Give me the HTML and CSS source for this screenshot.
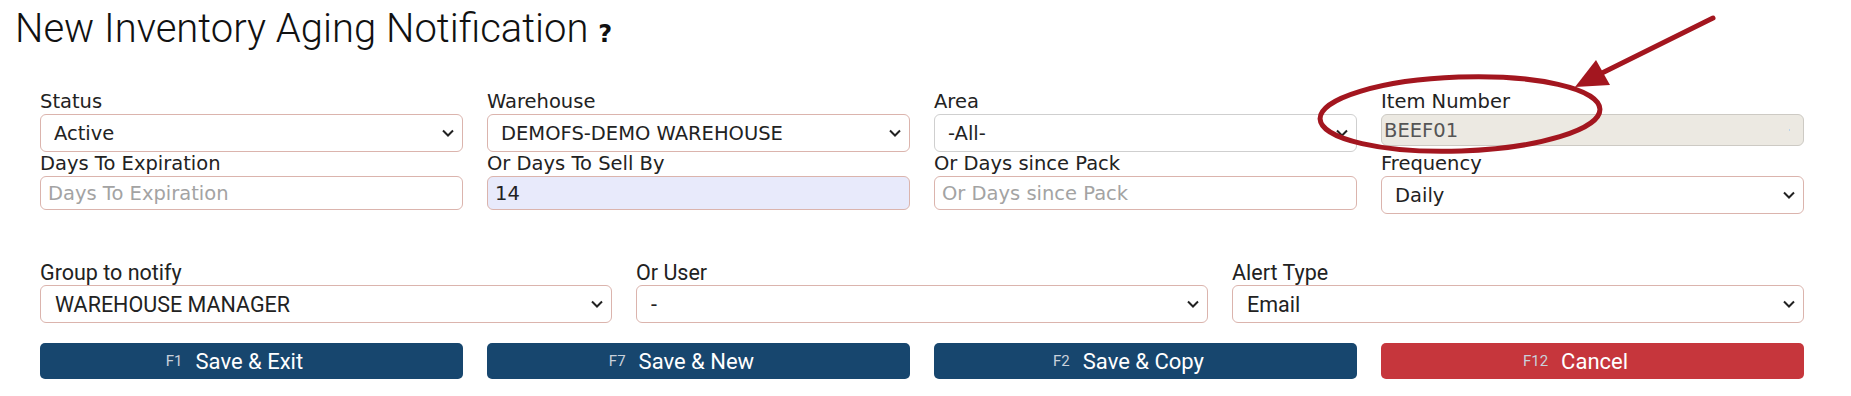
FILE: index.html
```html
<!DOCTYPE html>
<html lang="en">
<head>
    <meta charset="UTF-8">
    <meta name="viewport" content="width=device-width, initial-scale=1.0">
    <title>New Inventory Aging Notification</title>
    <link rel="stylesheet" href="styles.css">
</head>
<body>
    <div class="page">
        <h1 class="page-title">New Inventory Aging Notification <span class="help">?</span></h1>

        <!-- Filters -->
        <div class="form-grid">
            <div class="form-group">
                <label for="status">Status</label>
                <select id="status" class="ctl"><option>Active</option></select>
            </div>
            <div class="form-group">
                <label for="warehouse">Warehouse</label>
                <select id="warehouse" class="ctl"><option>DEMOFS-DEMO WAREHOUSE</option></select>
            </div>
            <div class="form-group">
                <label for="area">Area</label>
                <select id="area" class="ctl plain"><option>-All-</option></select>
            </div>
            <div class="form-group">
                <label for="itemNumber">Item Number</label>
                <input type="text" id="itemNumber" class="ctl readonly" value="BEEF01" readonly>
            </div>
            <div class="form-group">
                <label for="daysExp">Days To Expiration</label>
                <input type="text" id="daysExp" class="ctl" placeholder="Days To Expiration">
            </div>
            <div class="form-group">
                <label for="daysSell">Or Days To Sell By</label>
                <input type="text" id="daysSell" class="ctl filled" value="14" autofocus>
            </div>
            <div class="form-group">
                <label for="daysPack">Or Days since Pack</label>
                <input type="text" id="daysPack" class="ctl" placeholder="Or Days since Pack">
            </div>
            <div class="form-group">
                <label for="frequency">Frequency</label>
                <select id="frequency" class="ctl"><option>Daily</option></select>
            </div>
        </div>

        <!-- Who gets it -->
        <div class="form-grid cols-3">
            <div class="form-group">
                <label for="group">Group to notify</label>
                <select id="group" class="ctl"><option>WAREHOUSE MANAGER</option></select>
            </div>
            <div class="form-group">
                <label for="user">Or User</label>
                <select id="user" class="ctl"><option>-</option></select>
            </div>
            <div class="form-group">
                <label for="alertType">Alert Type</label>
                <select id="alertType" class="ctl"><option>Email</option></select>
            </div>
        </div>

        <div class="form-grid button-row">
            <button class="btn"><span class="key">F1</span>Save &amp; Exit</button>
            <button class="btn"><span class="key">F7</span>Save &amp; New</button>
            <button class="btn"><span class="key">F2</span>Save &amp; Copy</button>
            <button class="btn btn-cancel"><span class="key">F12</span>Cancel</button>
        </div>

        <!-- red markup drawn over the form -->
        <svg class="markup" width="1851" height="396" viewBox="0 0 1851 396">
            <ellipse cx="1460" cy="114" rx="140" ry="37" transform="rotate(-2 1460 114)" fill="none" stroke="#a3161f" stroke-width="5"/>
            <line x1="1713" y1="18" x2="1600" y2="74" stroke="#a3161f" stroke-width="5" stroke-linecap="round"/>
            <polygon points="1575,87 1596,60 1610,85" fill="#a3161f"/>
        </svg>
    </div>
</body>
</html>
```

FILE: styles.css
```css
body {
    margin: 0;
    font-family: "DejaVu Sans", Verdana, sans-serif;
    color: #222;
    background: #fff;
}
.page {
    position: relative;
    height: 396px;
    overflow: hidden;
}
.page-title {
    margin: 4px 0 31px 15px;
    font-family: Roboto, sans-serif;
    font-weight: 300;
    font-size: 40px;
    line-height: 50px;
    color: #111;
}
.page-title .help {
    font-family: "DejaVu Sans", sans-serif;
    font-weight: bold;
    font-size: 24px;
    vertical-align: baseline;
}
.form-grid {
    display: grid;
    grid-template-columns: repeat(4, 1fr);
    column-gap: 24px;
    margin: 0 47px 0 40px;
}
.form-group label {
    display: block;
    font-size: 19.5px;
    line-height: 24px;
}
.ctl {
    display: block;
    width: 100%;
    box-sizing: border-box;
    height: 38px;
    margin: 0;
    padding: 0 30px 0 13px;
    border: 1px solid #dbb4ad;
    border-radius: 6px;
    font-family: inherit;
    font-size: 19.5px;
    color: #222;
    background: #fff url("data:image/svg+xml;utf8,<svg xmlns='http://www.w3.org/2000/svg' width='12' height='8' viewBox='0 0 12 8'><path d='M1 1.5l5 5 5-5' fill='none' stroke='%23222' stroke-width='2'/></svg>") no-repeat right 8px center;
    -webkit-appearance: none;
    appearance: none;
    outline: none;
}
.ctl.plain {
    border-color: #cfcfcf;
}
input.ctl {
    height: 34px;
    padding: 0 7px;
    background-image: none;
}
input.ctl::placeholder {
    color: #a3a3a3;
}
.ctl.readonly {
    height: 32px;
    padding: 0 2px;
    border-color: #cdcac4;
    background-color: #ece9e2;
    background-image: radial-gradient(#bcd4ea 0.7px, transparent 1px);
    background-size: 11px 8px;
    color: #555;
}
.ctl.filled {
    background-color: #e8eafb;
}
.cols-3 {
    grid-template-columns: repeat(3, 1fr);
    margin-top: 47px;
    font-family: Roboto, sans-serif;
}
.cols-3 .form-group label,
.cols-3 .ctl {
    font-size: 21.5px;
}
.cols-3 .ctl {
    padding-left: 14px;
}
.button-row {
    margin-top: 20px;
}
.btn {
    display: flex;
    align-items: center;
    justify-content: center;
    gap: 13px;
    height: 36px;
    padding: 0 34px 0 0;
    border: none;
    border-radius: 5px;
    background-color: #17466e;
    color: white;
    font-family: Roboto, sans-serif;
    font-size: 22px;
    cursor: pointer;
}
.btn .key {
    font-size: 15px;
    color: #c9d1db;
}
.btn-cancel {
    background-color: #c6363c;
}
.markup {
    position: absolute;
    top: 0;
    left: 0;
    pointer-events: none;
}
```
